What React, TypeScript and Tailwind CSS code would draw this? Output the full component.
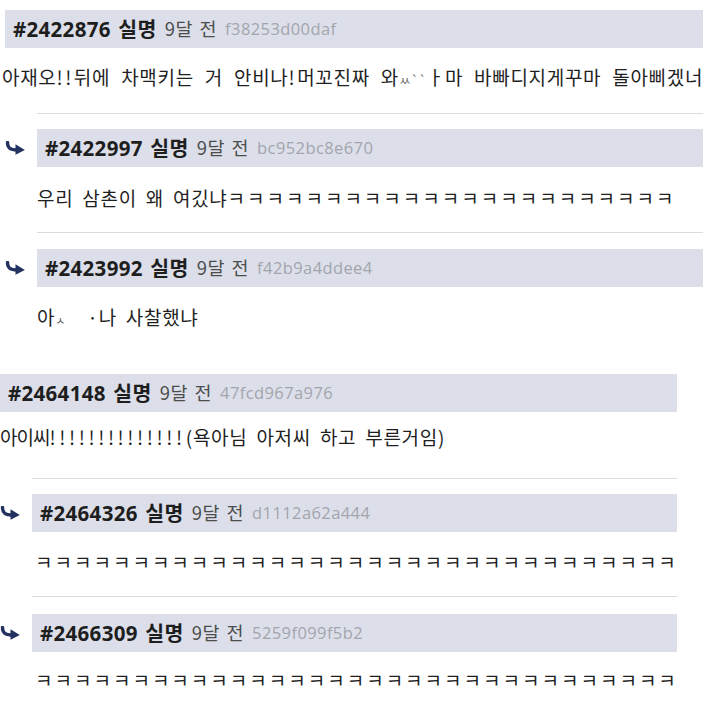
import React from 'react'

const KR = "font-['Noto_Sans_CJK_KR',sans-serif]"
const BODY = `${KR} h-[30px] leading-[30px] text-[19px] text-[#1f1f1f] whitespace-nowrap tracking-[0.7px] [word-spacing:4px]`

function ReplyArrow() {
  return (
    <svg width="21" height="14" viewBox="0 0 21 14" className="shrink-0">
      <path d="M2.5 1.5 C2.5 7 5 9 12 9" fill="none" stroke="#22315f" strokeWidth="3.4" strokeLinecap="round" />
      <path d="M10.5 3.3 L19.8 9 L10.5 13.8 Z" fill="#22315f" />
    </svg>
  )
}

interface HeadProps {
  id: string
  hash: string
}

function Head({ id, hash }: HeadProps) {
  return (
    <div className="h-[38px] bg-[#dcdfe9] flex items-center pl-2 gap-[8px] whitespace-nowrap">
      <span className="font-['Open_Sans','Noto_Sans_CJK_KR',sans-serif] font-bold text-[20.5px] text-[#1e1e1e] tracking-[0.3px] [word-spacing:2px]">
        {id} 실명
      </span>
      <span className={`${KR} text-[18.5px] text-[#4d4d4d] tracking-[0.5px] [word-spacing:2px]`}>9달 전</span>
      <span className="font-['Open_Sans',sans-serif] text-[16.5px] text-[#a3a5ad] tracking-[0.4px]">{hash}</span>
    </div>
  )
}

interface ReplyProps {
  id: string
  hash: string
  children: React.ReactNode
  bodyClass: string
}

function Reply({ id, hash, children, bodyClass }: ReplyProps) {
  return (
    <div className="flex flex-col">
      <div className="relative">
        <div className="absolute left-[-32px] top-[12px]">
          <ReplyArrow />
        </div>
        <Head id={id} hash={hash} />
      </div>
      <div className={`${BODY} ${bodyClass}`}>{children}</div>
    </div>
  )
}

const K23 = 'ㅋ'.repeat(23)
const K33 = 'ㅋ'.repeat(33)

export default function App() {
  return (
    <div className="w-[703px] h-[703px] overflow-hidden bg-white">
      {/* first thread */}
      <div className="pt-[10px] flex flex-col">
        <div className="ml-[5px] w-[720px]">
          <Head id="#2422876" hash="f38253d00daf" />
        </div>
        <div className={`${BODY} mt-[14px] ml-[2px] [word-spacing:6px]`}>
          아재오<span className="tracking-[2.5px]">!!</span>뒤에 차맥키는 거 안비나<span className="tracking-[2.5px]">!</span>머꼬진짜 와<span className="text-[#6f6f6f] text-[13px] tracking-[0px]">ㅆ``</span>ㅏ마 바빠디지게꾸마 돌아삐겠너
        </div>
        <div className="ml-[37px] mt-[21px] h-px w-[700px] bg-[#dcdcdc]" />
        <div className="ml-[37px] mt-[15px] w-[700px]">
          <Reply id="#2422997" hash="bc952bc8e670" bodyClass="mt-[16px]">
            우리 삼촌이 왜 여깄냐<span className="tracking-[2px]">{K23}</span>
          </Reply>
        </div>
        <div className="ml-[37px] mt-[19px] h-px w-[700px] bg-[#dcdcdc]" />
        <div className="ml-[37px] mt-[16px] w-[700px]">
          <Reply id="#2423992" hash="f42b9a4ddee4" bodyClass="mt-[15px]">
            아<span className="text-[11px] text-[#555] tracking-[0px]">ㅅ</span>
            <span className="inline-block w-[22px]" />·나 사찰했냐
          </Reply>
        </div>
      </div>

      {/* second thread */}
      <div className="mt-[42px] w-[677px] flex flex-col">
        <Head id="#2464148" hash="47fcd967a976" />
        <div className={`${BODY} mt-[10px]`}>
          <span className="tracking-[-1px]">아이씨</span>
          <span className="tracking-[3.6px]">!!!!!!!!!!!!!!</span>(욕아님 아저씨 하고 부른거임)
        </div>
        <div className="ml-[32px] mt-[26px] h-px bg-[#dcdcdc]" />
        <div className="ml-[32px] mt-[15px]">
          <Reply id="#2464326" hash="d1112a62a444" bodyClass="mt-[15px] pl-[3px]">
            <span className="tracking-[2px]">{K33}</span>
          </Reply>
        </div>
        <div className="ml-[32px] mt-[19px] h-px bg-[#dcdcdc]" />
        <div className="ml-[32px] mt-[17px]">
          <Reply id="#2466309" hash="5259f099f5b2" bodyClass="mt-[13px] pl-[3px]">
            <span className="tracking-[2px]">{K33}</span>
          </Reply>
        </div>
      </div>
    </div>
  )
}
